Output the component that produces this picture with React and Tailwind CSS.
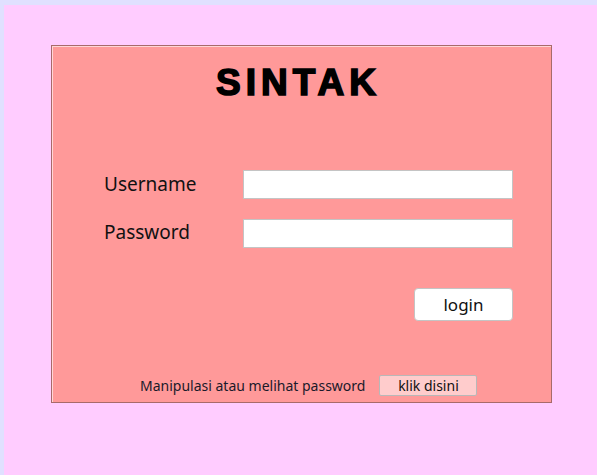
export default function App() {
  const ui = { fontFamily: '"Noto Sans", "Open Sans", sans-serif' };

  return (
    <div className="h-screen bg-[#e0e0ff] pl-[4px] pt-[5px]">
      <div className="h-full bg-[#ffccff] pl-[47px] pt-[40px]">
        <div
          className="w-[501px] h-[358px] bg-[#ff9999] border border-[#a86a6a] shadow-[inset_1px_1px_0_#ffd6d6] pt-[17px]"
          style={ui}
        >
          <h1
            className="h-[40px] leading-[40px] text-center pr-[6px] text-[37px] font-bold tracking-[5px] text-black [-webkit-text-stroke:1.6px_black]"
            style={{ fontFamily: '"Liberation Sans", Arial, sans-serif' }}
          >
            SINTAK
          </h1>

          <div className="mt-[67px] flex items-center pl-[52px]">
            <label className="w-[139px] text-[19px] text-[#111]">Username</label>
            <input
              type="text"
              className="w-[270px] h-[29px] bg-white border border-[#c4c4c4] outline-none"
            />
          </div>
          <div className="mt-[20px] flex items-center pl-[52px]">
            <label className="w-[139px] text-[19px] text-[#111] -mt-[2px]">Password</label>
            <input
              type="password"
              className="w-[270px] h-[29px] bg-white border border-[#c4c4c4] outline-none"
            />
          </div>

          <div className="mt-[40px] flex justify-end pr-[38px]">
            <button className="w-[99px] h-[33px] bg-white border border-[#c4c4c4] rounded-[4px] text-[17px] text-[#111]">
              login
            </button>
          </div>

          <div className="mt-[54px] flex items-center pl-[88px] gap-[14px]">
            <span className="text-[14px] text-[#1a1a2a]">Manipulasi atau melihat password</span>
            <button className="w-[98px] h-[21px] bg-[#ffcccc] border border-[#b8b8b8] rounded-[2px] text-[14px] leading-none text-[#111]">
              klik disini
            </button>
          </div>
        </div>
      </div>
    </div>
  );
}
